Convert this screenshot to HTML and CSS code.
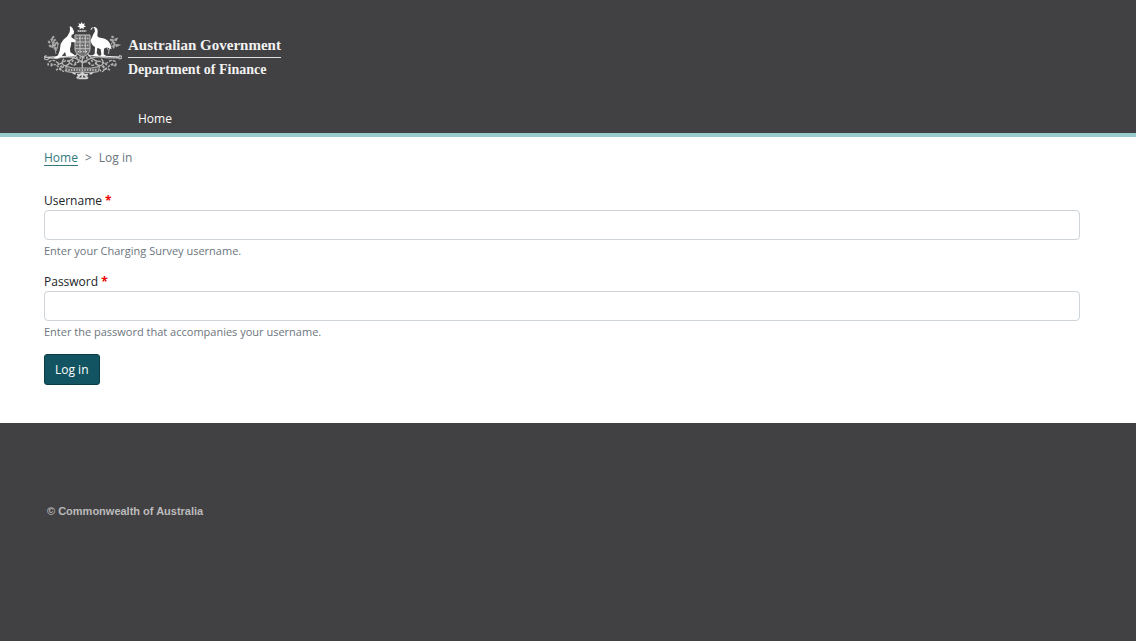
FILE: index.html
```html
<!DOCTYPE html>
<html lang="en">
<head>
<meta charset="utf-8">
<meta name="viewport" content="width=device-width, initial-scale=1">
<title>Log in</title>
<link rel="stylesheet" href="styles.css">
</head>
<body>
<header class="site-header">
  <div class="brand">
    <svg class="crest" viewBox="12 12 234 174" aria-hidden="true">
      <!-- star and wreath -->
      <path fill="#fff" d="M125 12l3 6 7-2-3 6 6 4-7 2 0 6-6-4-6 4 0-6-7-2 6-4-3-6 7 2z"/>
      <path stroke="#ddd" stroke-width="4" stroke-dasharray="5 1" d="M113 39h26"/>
      <!-- shield -->
      <path fill="#727273" stroke="#c4c4c4" stroke-width="3" d="M105 51h45v43q0 14-22 23-23-9-23-23z"/>
      <path fill="none" stroke="#bdbdbd" stroke-width="3" d="M105 72h45M105 92h45M120 51v55M136 51v55"/>
      <path fill="none" stroke="#e0e0e0" stroke-width="3" stroke-dasharray="4 4" d="M109 61h38M109 82h38M113 101h30"/>
      <!-- branches behind the supporters -->
      <g fill="none" stroke="#a8a8a8" stroke-width="3">
        <path d="M48 108Q47 84 34 68M47 96q-9-12-21-14M48 99q7-11 6-24M205 108q2-22 14-40M206 94q7-12 20-13M206 98q-9-10-8-22"/>
        <path stroke-width="8" stroke-dasharray="6 4" d="M25 74l11-9 7 13-16 8M38 55l6 12 7 10-14 8 15 9M219 54l-7 15 15-4-8 15 12 2-16 8M198 76l8 11"/>
      </g>
      <!-- scrollwork -->
      <g fill="none" stroke="#b4b4b4" stroke-width="4">
        <path d="M20 113q-12 4-6 10 9 5 13-3 23 1 42-2 23-5 45 6l15 10 16-10q22-11 45-6 24 3 44 1 5 7 11 1 3-7-8-7"/>
        <path stroke-dasharray="9 3" d="M26 132q14-10 24 0t20 0q12-9 20 2t16 6q10-14 22-7 13-7 23 7 8 6 16-4t18-4q11 9 20 0t22-1"/>
        <path stroke-dasharray="7 3" d="M32 145q12-11 21 0 10 14 20-3M48 157q10-9 18 0t14-5M227 145q-11-11-21 0-10 14-20-3M210 157q-10-9-18 0t-14-5"/>
        <path d="M72 122q-12 12 1 21 15 0 16-12M184 122q12 12-1 21-15 0-16-12M112 107q-12 19-30 23M143 107q13 19 31 23M127 113v38"/>
        <path stroke-width="7" stroke-dasharray="5 5" d="M22 139h20M54 137l10 9-5 13M200 137l-10 9 5 13M215 139h18M96 127l12 9M158 127l-12 9M108 119h38M113 130h29"/>
      </g>
      <path fill="none" stroke="#eee" stroke-width="3" d="M14 118l47-2 47-3M241 117l-45-2-51-2"/>
      <!-- motto ribbon -->
      <path fill="#626263" stroke="#b8b8b8" stroke-width="3" d="M77 145q25 8 50 5 27 3 52-5l-4 16q-25 6-48 1-25 5-47-1z"/>
      <path stroke="#d6d6d6" stroke-width="4" stroke-dasharray="4 4" d="M85 156h84"/>
      <path fill="none" stroke="#d4d4d4" stroke-width="5" d="M107 168l-9-3M149 168l9-3M110 181l17-17 17 17M111 170h33M115 181h26M127 163v18"/>
      <!-- kangaroo -->
      <path fill="#fff" d="M91 25l6 4 5 11-1 8-6 2-1 8 13 9-2 6-11-1-1 10-3 10 1 11 12 7v5H79l-4-13-10 13-13 7-12-1 14-9 5-14 3-20 8-13 12-10 7-13 1-9-1-7z"/>
      <!-- emu -->
      <path fill="#fff" d="M151 36q3-10 13-9 9 2 9 13l-1 14q4 6 12 6 17 2 25 15l6 19-15-6-8 4-1 17 9 6h-19l3-6-2-15-10-5-2 16 6 9h-20l8-7 1-20q-12-6-13-20l8-18 5-9-2-9-4-4-3 7z"/>
    </svg>
    <div class="brand-text">
      <span class="government">Australian Government</span>
      <span class="department">Department of Finance</span>
    </div>
  </div>
  <nav class="main-nav" aria-label="Main">
    <a href="#">Home</a>
  </nav>
</header>
<main class="content">
  <nav class="breadcrumb" aria-label="Breadcrumb">
    <a href="#">Home</a><span>&gt;</span><span>Log in</span>
  </nav>
  <form class="login">
    <div class="field">
      <label for="username">Username <span class="required">*</span></label>
      <input id="username" type="text" required>
      <p class="hint">Enter your Charging Survey username.</p>
    </div>
    <div class="field">
      <label for="password">Password <span class="required">*</span></label>
      <input id="password" type="password" required>
      <p class="hint">Enter the password that accompanies your username.</p>
    </div>
    <button class="submit" type="submit">Log in</button>
  </form>
</main>
<footer class="site-footer">© Commonwealth of Australia</footer>
</body>
</html>
```
FILE: styles.css
```css
* {
  box-sizing: border-box;
}

body {
  margin: 0;
  min-height: 100vh;
  display: flex;
  flex-direction: column;
  background: #fff;
  color: #212529;
  font-family: "Segoe UI", "Open Sans", sans-serif;
  font-size: 12px;
  line-height: 18px;
}

.site-header {
  padding: 22px 44px 0;
  background: #414042;
  border-bottom: 4px solid #98cccc;
}

.brand {
  display: flex;
  gap: 6px;
}

.crest {
  width: 78px;
  height: 58px;
}

.brand-text {
  display: flex;
  flex-direction: column;
  padding-top: 14px;
  color: #f2f2f2;
  font-family: "Liberation Serif", serif;
  font-weight: bold;
}

.government {
  padding-bottom: 3px;
  border-bottom: 1px solid #e0e0e0;
  font-size: 15px;
}

.department {
  padding-top: 3px;
  font-size: 14px;
}

.main-nav {
  padding: 30px 94px 5px;
}

.main-nav a {
  color: #fff;
  font-weight: 500;
  text-decoration: none;
}

.content {
  padding: 13px 56px 38px 44px;
}

.breadcrumb {
  display: flex;
  gap: 7px;
  color: #6c757d;
  line-height: 16px;
}

.breadcrumb a {
  color: #33797c;
  border-bottom: 1px solid #33797c;
  line-height: 15px;
  text-decoration: none;
}

.login {
  padding-top: 26px;
}

.field {
  display: flex;
  flex-direction: column;
  margin-bottom: 13px;
}

.required {
  color: #e00;
  font-weight: bold;
}

.field input {
  width: 100%;
  height: 30px;
  padding: 4px 8px;
  border: 1px solid #ced4da;
  border-radius: 4px;
  background: #fff;
  font: inherit;
}

.hint {
  margin: 2px 0 0;
  color: #6c757d;
  font-size: 11px;
}

.submit {
  height: 31px;
  padding: 0 10px;
  border: 1px solid #0b3d47;
  border-radius: 3px;
  background: #125461;
  color: #fff;
  font: inherit;
  font-weight: 500;
}

.site-footer {
  flex: 1;
  padding: 79px 47px;
  background: #414042;
  color: #bbb;
  font-family: "Liberation Sans", Arial, sans-serif;
  font-size: 11px;
  font-weight: bold;
}
```
